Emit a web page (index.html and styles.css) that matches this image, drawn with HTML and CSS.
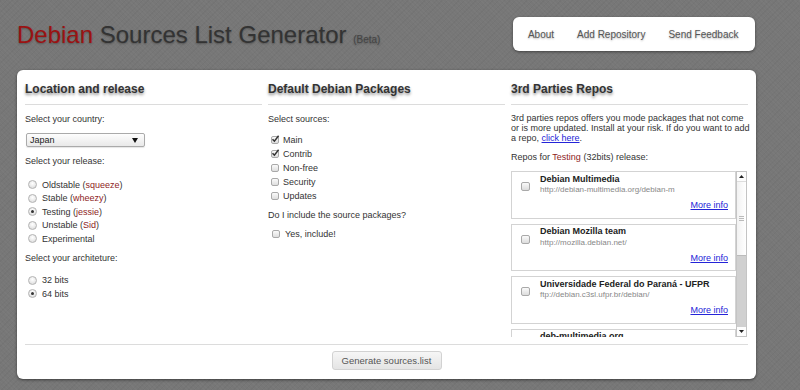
FILE: index.html
```html
<!DOCTYPE html>
<html lang="en">
<head>
<meta charset="utf-8">
<title>Debian Sources List Generator</title>
<link rel="stylesheet" href="styles.css">
</head>
<body>
<div class="page">
  <header class="top">
    <h1 class="title"><span class="brand">Debian</span> Sources List Generator <small class="beta">(Beta)</small></h1>
    <nav class="nav">
      <a href="#">About</a>
      <a href="#">Add Repository</a>
      <a href="#">Send Feedback</a>
    </nav>
  </header>

  <main class="card">
    <div class="cols">
      <section class="col">
        <h2 class="col-title">Location and release</h2>
        <p class="label">Select your country:</p>
        <div class="select"><span>Japan</span><svg class="arrow" width="6" height="5" viewBox="0 0 6 5"><path d="M0 0H6L3 5Z" fill="#111"/></svg></div>
        <p class="label">Select your release:</p>
        <ul class="opts">
          <li><span class="radio"></span>Oldstable (<em class="code">squeeze</em>)</li>
          <li><span class="radio"></span>Stable (<em class="code">wheezy</em>)</li>
          <li><span class="radio on"></span>Testing (<em class="code">jessie</em>)</li>
          <li><span class="radio"></span>Unstable (<em class="code">Sid</em>)</li>
          <li><span class="radio"></span>Experimental</li>
        </ul>
        <p class="label label-arch">Select your architeture:</p>
        <ul class="opts opts-arch">
          <li><span class="radio"></span>32 bits</li>
          <li><span class="radio on"></span>64 bits</li>
        </ul>
      </section>

      <section class="col">
        <h2 class="col-title">Default Debian Packages</h2>
        <p class="label">Select sources:</p>
        <ul class="checks">
          <li><span class="check on"><svg width="9" height="8" viewBox="0 0 9 8"><path d="M1.5 4.2L3.4 6.2L7.6 0.8" fill="none" stroke="#333" stroke-width="1.5"/></svg></span>Main</li>
          <li><span class="check on"><svg width="9" height="8" viewBox="0 0 9 8"><path d="M1.5 4.2L3.4 6.2L7.6 0.8" fill="none" stroke="#333" stroke-width="1.5"/></svg></span>Contrib</li>
          <li><span class="check"></span>Non-free</li>
          <li><span class="check"></span>Security</li>
          <li><span class="check"></span>Updates</li>
        </ul>
        <p class="label label-src">Do I include the source packages?</p>
        <ul class="checks checks-src">
          <li><span class="check check-wide"></span>Yes, include!</li>
        </ul>
      </section>

      <section class="col col-repos">
        <h2 class="col-title">3rd Parties Repos</h2>
        <p class="intro">3rd parties repos offers you mode packages that not come<br>or is more updated. Install at your risk. If do you want to add<br>a repo, <a href="#" class="link">click here</a>.</p>
        <p class="intro intro-for">Repos for <em class="code">Testing</em> (32bits) release:</p>
        <div class="scroller">
          <div class="repo-list">
            <div class="repo">
              <span class="repo-check"></span>
              <div class="repo-body">
                <div class="repo-name">Debian Multimedia</div>
                <div class="repo-url">http://debian-multimedia.org/debian-m</div>
                <a href="#" class="link more">More info</a>
              </div>
            </div>
            <div class="repo">
              <span class="repo-check"></span>
              <div class="repo-body">
                <div class="repo-name">Debian Mozilla team</div>
                <div class="repo-url">http://mozilla.debian.net/</div>
                <a href="#" class="link more">More info</a>
              </div>
            </div>
            <div class="repo">
              <span class="repo-check"></span>
              <div class="repo-body">
                <div class="repo-name">Universidade Federal do Paraná - UFPR</div>
                <div class="repo-url">ftp://debian.c3sl.ufpr.br/debian/</div>
                <a href="#" class="link more">More info</a>
              </div>
            </div>
            <div class="repo">
              <span class="repo-check"></span>
              <div class="repo-body">
                <div class="repo-name">deb-multimedia.org</div>
              </div>
            </div>
          </div>
          <div class="scrollbar">
            <div class="sb-btn"><svg width="5" height="3" viewBox="0 0 5 3"><path d="M0 3H5L2.5 0Z" fill="#222"/></svg></div>
            <div class="sb-thumb"><span class="grip"></span></div>
            <div class="sb-track"></div>
            <div class="sb-btn"><svg width="5" height="3" viewBox="0 0 5 3"><path d="M0 0H5L2.5 3Z" fill="#222"/></svg></div>
          </div>
        </div>
      </section>
    </div>

    <footer class="card-foot">
      <button class="btn" type="button">Generate sources.list</button>
    </footer>
  </main>
</div>
</body>
</html>
```

FILE: styles.css
```css
* { box-sizing: border-box; }

html, body { margin: 0; }

body {
  width: 800px;
  height: 390px;
  overflow: hidden;
  background-color: #777;
  background-image:
    repeating-linear-gradient(45deg, rgba(255,255,255,0.025) 0 1px, transparent 1px 3px),
    repeating-linear-gradient(-45deg, rgba(0,0,0,0.03) 0 1px, transparent 1px 4px);
  font-family: "Liberation Sans", Arial, sans-serif;
  color: #333;
}

.page {
  width: 739px;
  margin-left: 17px;
}

/* header */
.top {
  height: 70px;
  padding-top: 17px;
  display: flex;
  justify-content: space-between;
  align-items: flex-start;
}

.title {
  margin: 4px 0 0;
  font-size: 24px;
  line-height: 28px;
  font-weight: normal;
  color: #333;
  text-shadow: 0 1px 2px rgba(0,0,0,0.3);
  white-space: nowrap;
}

.brand { color: #9a1212; }

.beta {
  font-size: 10px;
  color: #444;
  margin-left: 0;
}

.nav {
  display: flex;
  align-items: center;
  height: 34px;
  margin-right: 1px;
  padding: 0 5px 0 3px;
  background: #fff;
  border-radius: 6px;
  box-shadow: 0 1px 3px rgba(0,0,0,0.45);
}

.nav a {
  padding: 0 11.5px;
  font-size: 10px;
  color: #555;
  text-decoration: none;
  text-shadow: 0 1px 2px rgba(0,0,0,0.3);
}

/* card */
.card {
  height: 309px;
  padding: 11px 8px 9px;
  background: #fff;
  border-radius: 6px;
  box-shadow: 0 1px 3px rgba(0,0,0,0.5);
  display: flex;
  flex-direction: column;
}

.cols {
  height: 256px;
  display: grid;
  grid-template-columns: repeat(3, 237px);
  column-gap: 6px;
}

.col {
  display: flex;
  flex-direction: column;
  min-height: 0;
}

.col-title {
  margin: 0;
  padding-bottom: 7px;
  border-bottom: 1px solid #dcdcdc;
  font-size: 12px;
  line-height: 16px;
  font-weight: bold;
  color: #333;
  text-shadow: 0 2px 3px rgba(0,0,0,0.45);
}

.label {
  margin: 9px 0 0;
  font-size: 9px;
  line-height: 11px;
  color: #333;
}

.label-arch { margin-top: 7px; }
.label-src { margin-top: 8px; }

.code {
  font-style: normal;
  color: #8e1d1d;
}

/* select */
.select {
  width: 119px;
  height: 14px;
  margin: 8px 0 0 1px;
  padding: 0 6px 0 3px;
  display: flex;
  align-items: center;
  justify-content: space-between;
  border: 1px solid #aaa;
  border-radius: 2px;
  background: linear-gradient(#fdfdfd, #e9e9e9);
  box-shadow: 0 1px 1px rgba(0,0,0,0.1);
  font-size: 9px;
  color: #222;
}

/* radios */
.opts, .checks {
  list-style: none;
  margin: 11px 0 0;
  padding: 0;
  font-size: 9px;
  color: #333;
}

.opts li {
  height: 13.5px;
  display: flex;
  align-items: center;
}

.opts-arch { margin-top: 10px; }

.radio {
  width: 9px;
  height: 9px;
  margin: 0 5px 0 3px;
  flex: none;
  border: 1px solid #b3b3b3;
  border-radius: 50%;
  background: radial-gradient(circle at 50% 35%, #fff 0, #f0f0f0 40%, #d6d6d6 100%);
  display: flex;
  align-items: center;
  justify-content: center;
}

.radio.on::after {
  content: "";
  width: 3px;
  height: 3px;
  border-radius: 50%;
  background: #333;
}

/* checkboxes */
.checks { margin-top: 8px; }

.checks li {
  height: 13.9px;
  display: flex;
  align-items: center;
}

.checks-src { margin-top: 6px; }

.check {
  position: relative;
  width: 8px;
  height: 8px;
  margin: 0 4px 0 3px;
  flex: none;
  border: 1px solid #a9a9a9;
  border-radius: 2px;
  background: linear-gradient(#fafafa, #dedede);
}

.check svg {
  position: absolute;
  left: -1px;
  top: -2px;
}

.check-wide { margin: 0 5px 0 4px; }

/* third party repos */
.intro {
  margin: 8px 0 0;
  font-size: 9px;
  line-height: 10px;
  color: #333;
  white-space: nowrap;
}

.intro-for { margin-top: 9px; }

.link {
  color: #2424d8;
  text-decoration: underline;
}

.scroller {
  margin: 9px 1px 0 0;
  height: 166px;
  display: flex;
}

.repo-list {
  flex: 1;
  min-width: 0;
  overflow: hidden;
}

.repo {
  height: 47.5px;
  margin-bottom: 5px;
  padding: 1.5px 7px 0 0;
  display: flex;
  border: 1px solid #d3d3d3;
  background: #fff;
}

.repo-check {
  width: 9px;
  height: 9px;
  margin: 8.5px 10px 0 9px;
  flex: none;
  border: 1px solid #a9a9a9;
  border-radius: 2px;
  background: linear-gradient(#fafafa, #dcdcdc);
}

.repo-body {
  flex: 1;
  min-width: 0;
  display: flex;
  flex-direction: column;
}

.repo-name {
  font-size: 9px;
  line-height: 10px;
  font-weight: bold;
  color: #222;
  white-space: nowrap;
}

.repo-url {
  margin-top: 1.8px;
  font-size: 8px;
  line-height: 10px;
  color: #888;
  white-space: nowrap;
}

.more {
  margin-top: 5px;
  align-self: flex-end;
  font-size: 9px;
  line-height: 10px;
}

/* fake scrollbar */
.scrollbar {
  width: 11px;
  flex: none;
  display: flex;
  flex-direction: column;
  border: 1px solid #c4c4c4;
  background: #fff;
}

.sb-btn {
  height: 9px;
  flex: none;
  display: flex;
  align-items: center;
  justify-content: center;
  background: #fdfdfd;
}

.sb-thumb {
  height: 75px;
  flex: none;
  display: flex;
  align-items: center;
  justify-content: center;
  border-top: 1px solid #ddd;
  border-bottom: 1px solid #bbb;
  background: linear-gradient(90deg, #f2f2f2, #fff);
}

.grip {
  width: 5px;
  height: 5px;
  background: repeating-linear-gradient(#bbb 0 1px, transparent 1px 2px);
}

.sb-track {
  flex: 1;
  background: #d0d0d0;
}

/* footer */
.card-foot {
  margin-top: 7px;
  padding-top: 6px;
  border-top: 1px solid #dcdcdc;
  display: flex;
  justify-content: center;
}

.btn {
  width: 110px;
  height: 19px;
  padding: 0;
  border: 1px solid #d2d2d2;
  border-radius: 3px;
  background: linear-gradient(#f6f6f6, #e4e4e4);
  font-family: "Liberation Sans", Arial, sans-serif;
  font-size: 9.5px;
  color: #555;
}
```
